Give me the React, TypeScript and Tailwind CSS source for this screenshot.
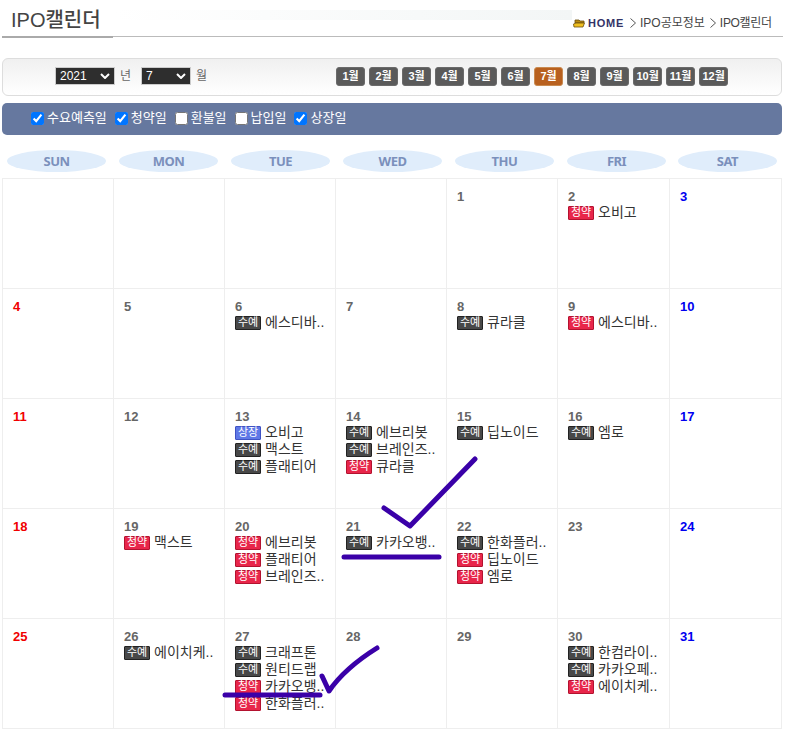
import React from 'react';

type Kind = 'su' | 'cy' | 'sj';
type Ev = [Kind, string];
type Day = { d?: number; ev?: Ev[] };

const KR = "font-['Liberation_Sans','Noto_Sans_CJK_KR',sans-serif]";

const weekdays = ['SUN', 'MON', 'TUE', 'WED', 'THU', 'FRI', 'SAT'];
const months = [1, 2, 3, 4, 5, 6, 7, 8, 9, 10, 11, 12];

const filters = [
  { label: '수요예측일', on: true },
  { label: '청약일', on: true },
  { label: '환불일', on: false },
  { label: '납입일', on: false },
  { label: '상장일', on: true },
];

const days: Day[] = [
  {}, {}, {}, {},
  { d: 1 },
  { d: 2, ev: [['cy', '오비고']] },
  { d: 3 },
  { d: 4 },
  { d: 5 },
  { d: 6, ev: [['su', '에스디바..']] },
  { d: 7 },
  { d: 8, ev: [['su', '큐라클']] },
  { d: 9, ev: [['cy', '에스디바..']] },
  { d: 10 },
  { d: 11 },
  { d: 12 },
  { d: 13, ev: [['sj', '오비고'], ['su', '맥스트'], ['su', '플래티어']] },
  { d: 14, ev: [['su', '에브리봇'], ['su', '브레인즈..'], ['cy', '큐라클']] },
  { d: 15, ev: [['su', '딥노이드']] },
  { d: 16, ev: [['su', '엠로']] },
  { d: 17 },
  { d: 18 },
  { d: 19, ev: [['cy', '맥스트']] },
  { d: 20, ev: [['cy', '에브리봇'], ['cy', '플래티어'], ['cy', '브레인즈..']] },
  { d: 21, ev: [['su', '카카오뱅..']] },
  { d: 22, ev: [['su', '한화플러..'], ['cy', '딥노이드'], ['cy', '엠로']] },
  { d: 23 },
  { d: 24 },
  { d: 25 },
  { d: 26, ev: [['su', '에이치케..']] },
  { d: 27, ev: [['su', '크래프톤'], ['su', '원티드랩'], ['cy', '카카오뱅..'], ['cy', '한화플러..']] },
  { d: 28 },
  { d: 29 },
  { d: 30, ev: [['su', '한컴라이..'], ['su', '카카오페..'], ['cy', '에이치케..']] },
  { d: 31 },
];

function Badge({ kind }: { kind: Kind }) {
  if (kind === 'cy') {
    return <span className="flex h-[14px] w-[26px] shrink-0 items-center justify-center rounded-[1px] border border-[#b3122f] bg-[#e8264a] text-[11px] leading-none text-white">청약</span>;
  }
  if (kind === 'sj') {
    return <span className="flex h-[14px] w-[26px] shrink-0 items-center justify-center rounded-[1px] border border-[#3f52c4] bg-[#5f78e6] text-[11px] leading-none text-white">상장</span>;
  }
  return <span className="flex h-[14px] w-[26px] shrink-0 items-center justify-center rounded-[1px] border border-[#222] bg-[#484848] text-[11px] leading-none text-white">수예</span>;
}

function Cell({ day, col }: { day: Day; col: number }) {
  let color = 'text-[#666]';
  if (col === 0) color = 'text-[#f00000]';
  if (col === 6) color = 'text-[#0000f0]';
  return (
    <div className="h-[110px] border-r border-b border-[#eeeeee] pt-[10px] pl-[10px]">
      {day.d && <div className={`h-[15px] text-[13px] leading-[16px] font-bold ${color}`}>{day.d}</div>}
      {day.ev?.map(([kind, name], i) => (
        <div key={i} className="flex h-[17px] items-center gap-[4px]">
          <Badge kind={kind} />
          <span className="text-[14px] leading-[17px] whitespace-nowrap text-[#333]">{name}</span>
        </div>
      ))}
    </div>
  );
}

function Chevron() {
  return (
    <svg width="10" height="6" viewBox="0 0 10 6">
      <path d="M1 1 L5 5 L9 1" fill="none" stroke="#fff" strokeWidth="2" />
    </svg>
  );
}

function Crumb() {
  return (
    <svg width="6" height="10" viewBox="0 0 6 10" className="mr-[4px] ml-[5px] shrink-0">
      <path d="M0.5 0.5 L5.5 5 L0.5 9.5" fill="none" stroke="#555" strokeWidth="1" />
    </svg>
  );
}

export default function App() {
  return (
    <div className={`relative h-[729px] w-[785px] overflow-hidden bg-white ${KR}`}>
      {/* title */}
      <div className="relative mx-[2px] flex h-[37px] w-[781px] items-start justify-between border-b border-[#bbbbbb]">
        <div className="h-[38px] w-[111px] border-b-2 border-[#aaaaaa] pt-[8px] pl-[9px] text-[20px] leading-[24px] font-medium text-[#444]">IPO캘린더</div>
        <div className="mt-[10px] h-[10px] w-[458px] bg-gradient-to-r from-white to-[#f3f6f6]" />
        <div className="mt-[15px] flex w-[210px] items-center text-[12px] leading-[16px] text-[#444]">
          <svg width="12" height="9" viewBox="0 0 12 9" className="mr-[3px]">
            <path d="M2 1 H6 L7 2 H11 L11 4 H2 Z" fill="#b98a12" stroke="#6b4e0c" strokeWidth="0.8" />
            <path d="M3 4 H11.5 L10 8 H1 L0.5 5 Z" fill="#f0c020" stroke="#6b4e0c" strokeWidth="0.8" />
          </svg>
          <span className="mr-[1px] text-[11px] font-bold tracking-[0.75px] text-[#333366]">HOME</span>
          <Crumb />
          <span>IPO공모정보</span>
          <Crumb />
          <span className="tracking-[-0.3px]">IPO캘린더</span>
        </div>
      </div>

      {/* year / month */}
      <div className="mx-[2px] mt-[21px] flex h-[38px] w-[780px] items-center rounded-[6px] border border-[#dddddd] bg-gradient-to-b from-[#f0f0f0] to-white pb-[2px]">
        <div className="ml-[52px] flex h-[18px] w-[60px] items-center justify-between border border-[#cccccc] bg-[#2e2e2e] px-[4px] text-[12px] text-white">
          2021
          <Chevron />
        </div>
        <span className="ml-[5px] text-[12px] text-[#666]">년</span>
        <div className="ml-[10px] flex h-[18px] w-[50px] items-center justify-between border border-[#cccccc] bg-[#2e2e2e] px-[4px] text-[12px] text-white">
          7
          <Chevron />
        </div>
        <span className="ml-[5px] text-[12px] text-[#666]">월</span>
        <div className="ml-[129px] flex gap-[4px]">
          {months.map((m) => (
            <div
              key={m}
              className={`flex h-[19px] w-[29px] items-center justify-center rounded-[3px] border text-[11px] font-bold text-white ${m === 7 ? 'border-[#c98a50] bg-[#b8601e]' : 'border-[#6a6a6a] bg-[#5a5a5a]'}`}
            >
              {m}월
            </div>
          ))}
        </div>
      </div>

      {/* filters */}
      <div className="mx-[2px] mt-[7px] flex h-[32px] w-[780px] items-center rounded-[5px] bg-[#66789f] pb-[2px] pl-[29px] text-[13px] text-white">
        {filters.map((f) => (
          <label key={f.label} className="mr-[8px] flex items-center gap-[3px]">
            <input type="checkbox" defaultChecked={f.on} className="h-[13px] w-[13px] accent-[#0075ff]" />
            {f.label}
          </label>
        ))}
      </div>

      {/* weekdays */}
      <div className="mt-[15px] ml-[7px] grid h-[22px] grid-cols-[112px_112px_112px_112px_112px_111px_99px]">
        {weekdays.map((w) => (
          <div key={w} className="flex h-[22px] w-[99px] items-center justify-center rounded-[50%] bg-[#e0edfb] pt-[1px] font-['Noto_Sans',sans-serif] text-[13px] font-bold tracking-[-0.5px] text-[#7b90bc]">
            {w}
          </div>
        ))}
      </div>

      {/* calendar */}
      <div className="mt-[6px] ml-[2px] grid w-[780px] grid-cols-[111px_111px_111px_111px_111px_112px_112px] border-t border-l border-[#eeeeee]">
        {days.map((day, i) => (
          <Cell key={i} day={day} col={i % 7} />
        ))}
      </div>

      {/* hand drawn marks */}
      <svg width="785" height="729" className="pointer-events-none absolute top-0 left-0">
        <g fill="none" stroke="#3a00a8" strokeWidth="5" strokeLinecap="round" strokeLinejoin="round">
          <path d="M384 508 L410 526 L475 459" />
          <path d="M344 557 L439 557" />
          <path d="M322 676 L329 691 Q345 668 377 648" />
          <path d="M225 695 L320 695" />
        </g>
      </svg>
    </div>
  );
}
